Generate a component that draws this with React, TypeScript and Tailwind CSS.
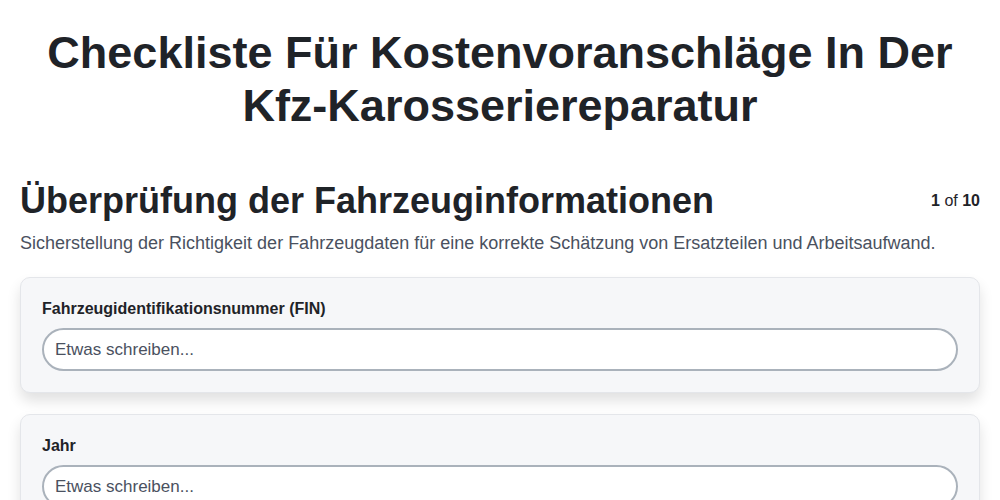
const FONT = "font-['Liberation_Sans',Arial,sans-serif]";

const fields = [
  { label: "Fahrzeugidentifikationsnummer (FIN)" },
  { label: "Jahr" },
  { label: "Marke" },
];

export default function App() {
  return (
    <div className={`${FONT} min-h-screen bg-white text-[#1f2328]`}>
      {/* page title */}
      <h1 className="px-10 pt-[26px] text-center text-[45px] font-bold leading-[53px]">
        Checkliste Für Kostenvoranschläge In Der Kfz-Karosseriereparatur
      </h1>

      {/* step header */}
      <div className="px-5 pt-[47px]">
        <div className="flex items-start justify-between">
          <h2 className="text-[36px] font-bold leading-[42px] pt-[1px]">
            Überprüfung der Fahrzeuginformationen
          </h2>
          <div className="pt-[10px] text-[16px]">
            <span className="font-bold">1</span> of <span className="font-bold">10</span>
          </div>
        </div>
        <p className="mt-[10px] text-[18px] leading-[22px] text-[#4a5160]">
          Sicherstellung der Richtigkeit der Fahrzeugdaten für eine korrekte Schätzung von Ersatzteilen und Arbeitsaufwand.
        </p>

        {/* fields */}
        <div className="mt-[23px] flex flex-col gap-[21px]">
          {fields.map((f) => (
            <div
              key={f.label}
              className="rounded-[10px] border border-[#e4e6ea] bg-[#f6f7f9] px-[21px] pb-[21px] pt-[21px] shadow-[0_8px_14px_rgba(0,0,0,0.12)]"
            >
              <label className="block text-[16px] font-bold leading-[20px] text-[#1f2328]">
                {f.label}
              </label>
              <input
                placeholder="Etwas schreiben..."
                className="mt-[9px] h-[43px] w-full rounded-full border-2 border-[#aab2bb] bg-white px-[11px] text-[17px] text-[#1f2328] outline-none placeholder:text-[#4a5160]"
              />
            </div>
          ))}
        </div>
      </div>
    </div>
  );
}
